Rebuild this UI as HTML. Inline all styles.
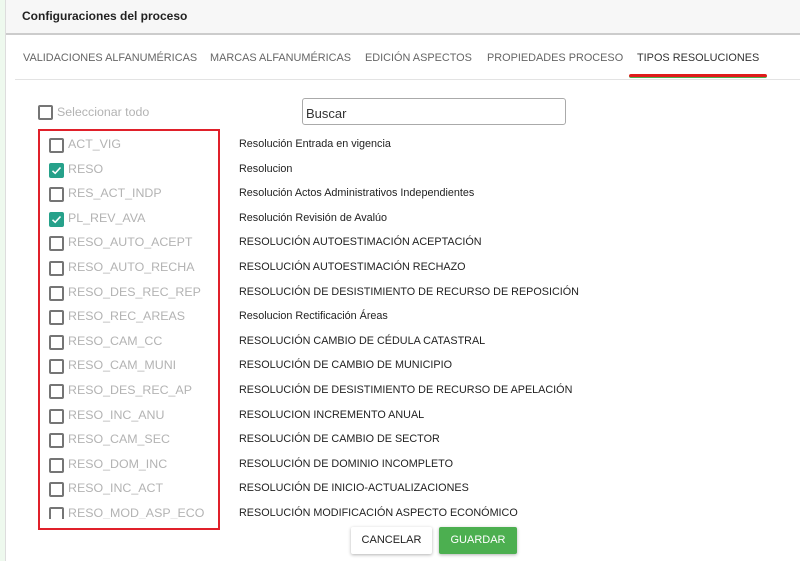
<!DOCTYPE html>
<html><head><meta charset="utf-8"><style>
*{margin:0;padding:0;box-sizing:border-box}
body{width:800px;height:561px;overflow:hidden;background:#eef9ee;font-family:"Liberation Sans",sans-serif;position:relative}
.panel{position:absolute;left:5px;top:0;width:795px;height:561px;background:#fff;border-left:1px solid #ddd}
.hdr{position:absolute;left:0;top:0;width:100%;height:35px;background:#f7f7f7;border-bottom:2px solid #ccc}
.hdr span{position:absolute;left:16px;top:9px;font-size:12px;font-weight:bold;color:#222}
.tab{position:absolute;top:52px;font-size:10.9px;color:#666;white-space:nowrap}
.sep{position:absolute;left:9px;right:0;top:79px;height:1px;background:#e3e3e3}
.ul{position:absolute;left:623px;top:74px;width:138px;height:4px;background:#e01b1b;border-bottom:1px solid #4caf50;border-radius:2px}
.cb{position:absolute;width:15px;height:15px;border:2px solid #757575;border-radius:2px;background:#fff}
.cb.on{background:#26a18a;border-color:#26a18a}
.code{position:absolute;font-size:12.4px;color:#b3b3b3;white-space:nowrap}
.desc{position:absolute;left:233px;font-size:10.8px;color:#222;white-space:nowrap}
.red{position:absolute;left:32px;top:129px;width:182px;height:401px;border:2px solid #e0202a}
.clip{position:absolute;left:34px;top:131px;width:178px;height:388px;overflow:hidden}
.btn{position:absolute;top:527px;height:27px;font-size:11px;line-height:27px;text-align:center;border-radius:2px}
</style></head><body>
<div class="panel">
<div class="hdr"><span>Configuraciones del proceso</span></div>
<div class="tab" style="left:17px">VALIDACIONES ALFANUMÉRICAS</div>
<div class="tab" style="left:204px">MARCAS ALFANUMÉRICAS</div>
<div class="tab" style="left:359px">EDICIÓN ASPECTOS</div>
<div class="tab" style="left:481px">PROPIEDADES PROCESO</div>
<div class="tab" style="left:631px;color:#333">TIPOS RESOLUCIONES</div>
<div class="ul"></div>
<div class="sep"></div>
<div class="cb" style="left:32px;top:105px"></div>
<div class="code" style="left:51px;top:105px;font-size:12.4px">Seleccionar todo</div>
<div style="position:absolute;left:296px;top:98px;width:264px;height:27px;border:1px solid #aaa;border-radius:3px;font-size:13px;color:#333;padding:7px 0 0 3px">Buscar</div>
<div class="red"></div>
<div class="clip" id="clip"></div>
<div id="descs"></div>
<div class="btn" style="left:345px;width:81px;background:#fff;color:#222;box-shadow:0 1px 3px rgba(0,0,0,.3)">CANCELAR</div>
<div class="btn" style="left:433px;width:78px;background:#4caf50;color:#fff;box-shadow:0 1px 3px rgba(0,0,0,.3)">GUARDAR</div>
</div>
<script>
var d=[["ACT_VIG","Resolución Entrada en vigencia",0],["RESO","Resolucion",1],["RES_ACT_INDP","Resolución Actos Administrativos Independientes",0],["PL_REV_AVA","Resolución Revisión de Avalúo",1],["RESO_AUTO_ACEPT","RESOLUCIÓN AUTOESTIMACIÓN ACEPTACIÓN",0],["RESO_AUTO_RECHA","RESOLUCIÓN AUTOESTIMACIÓN RECHAZO",0],["RESO_DES_REC_REP","RESOLUCIÓN DE DESISTIMIENTO DE RECURSO DE REPOSICIÓN",0],["RESO_REC_AREAS","Resolucion Rectificación Áreas",0],["RESO_CAM_CC","RESOLUCIÓN CAMBIO DE CÉDULA CATASTRAL",0],["RESO_CAM_MUNI","RESOLUCIÓN DE CAMBIO DE MUNICIPIO",0],["RESO_DES_REC_AP","RESOLUCIÓN DE DESISTIMIENTO DE RECURSO DE APELACIÓN",0],["RESO_INC_ANU","RESOLUCION INCREMENTO ANUAL",0],["RESO_CAM_SEC","RESOLUCIÓN DE CAMBIO DE SECTOR",0],["RESO_DOM_INC","RESOLUCIÓN DE DOMINIO INCOMPLETO",0],["RESO_INC_ACT","RESOLUCIÓN DE INICIO-ACTUALIZACIONES",0],["RESO_MOD_ASP_ECO","RESOLUCIÓN MODIFICACIÓN ASPECTO ECONÓMICO",0]];
var c="",s="";
d.forEach(function(r,i){var y=145+i*24.6;var cy=y-131;
c+='<div class="cb'+(r[2]?' on':'')+'" style="left:9px;top:'+(cy-7)+'px">'+(r[2]?'<svg width="11" height="11" viewBox="0 0 11 11" style="position:absolute;left:0;top:0"><path d="M1.5 5.8L4.2 8.3L9.5 2.5" stroke="#fff" stroke-width="1.6" fill="none"/></svg>':'')+'</div><div class="code" style="left:28px;top:'+(cy-8)+'px">'+r[0]+'</div>';
s+='<div class="desc" style="top:'+(y-7)+'px">'+r[1]+'</div>';});
document.getElementById("clip").innerHTML=c;document.getElementById("descs").innerHTML=s;
</script>
</body></html>
